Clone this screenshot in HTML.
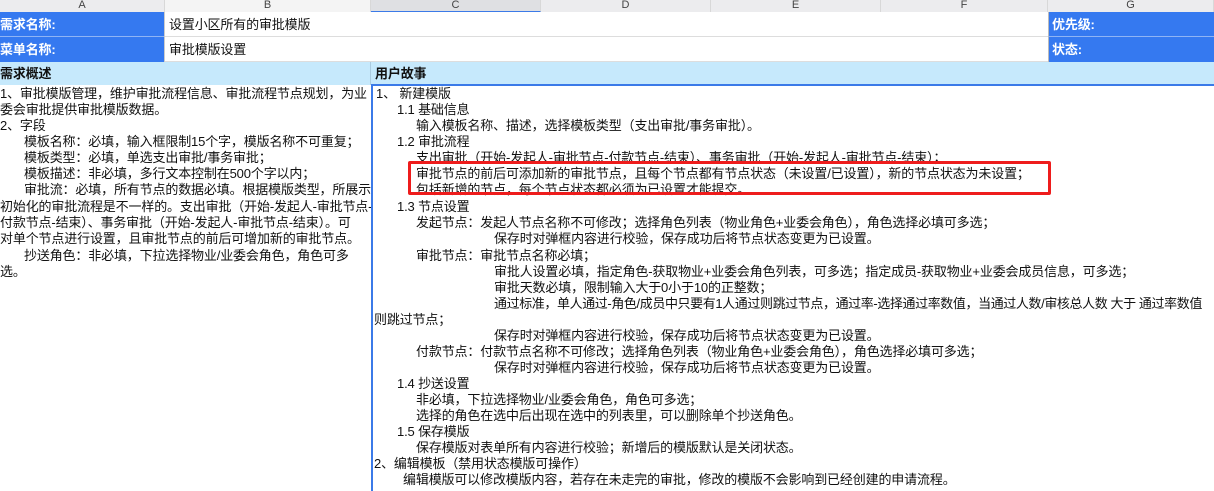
<!DOCTYPE html>
<html><head><meta charset="utf-8"><style>
*{margin:0;padding:0;box-sizing:border-box}
body{width:1214px;height:491px;overflow:hidden;background:#fff;position:relative;font-family:"Liberation Sans","Noto Sans CJK SC",sans-serif;font-size:13px;color:#111;letter-spacing:-0.15px}
.a{position:absolute;white-space:nowrap;line-height:16px;height:16px}
.b{position:absolute}
.hd{position:absolute;top:0;height:12px;font-size:11px;line-height:10px;text-align:center;color:#444;background:#ececee;border-right:1px solid #d8d8d8;overflow:hidden;letter-spacing:0}
.lbl{position:absolute;color:#fff;font-weight:bold;line-height:25px;background:#3579f0;padding-left:0}
</style></head><body>
<div class="hd" style="left:0;width:165px">A</div>
<div class="hd" style="left:165px;width:206px;background:#f4f4f4">B</div>
<div class="hd" style="left:371px;width:170px;background:#dfe0e3;border-bottom:1px solid #3b7ae8">C</div>
<div class="hd" style="left:541px;width:170px">D</div>
<div class="hd" style="left:711px;width:170px">E</div>
<div class="hd" style="left:881px;width:167px">F</div>
<div class="hd" style="left:1048px;width:166px">G</div>

<div class="lbl" style="left:0;top:12px;width:164px;height:25px;border-bottom:1px solid #8fb4f5">需求名称:</div>
<div class="lbl" style="left:0;top:37px;width:164px;height:25px">菜单名称:</div>
<div class="b" style="left:164px;top:12px;width:884px;height:50px;background:#fff;border-left:1px solid #ccc"></div>
<div class="b" style="left:165px;top:36px;width:883px;height:1px;background:#ddd"></div>
<div class="b" style="left:165px;top:61px;width:883px;height:1px;background:#ddd"></div>
<div class="a" style="left:169px;top:17px">设置小区所有的审批模版</div>
<div class="a" style="left:169px;top:42px">审批模版设置</div>
<div class="lbl" style="left:1048px;top:12px;width:166px;height:25px;padding-left:3px;border-bottom:1px solid #8fb4f5;border-left:1px solid #bbb">优先级:</div>
<div class="lbl" style="left:1048px;top:37px;width:166px;height:25px;padding-left:3px;border-left:1px solid #bbb">状态:</div>

<div class="b" style="left:0;top:62px;width:1214px;height:23px;background:#c6e9fc"></div>
<div class="b" style="left:370px;top:62px;width:1px;height:23px;background:#aacbe0"></div>
<div class="a" style="left:0;top:66px;font-weight:bold">需求概述</div>
<div class="a" style="left:375px;top:66px;font-weight:bold">用户故事</div>

<div class="a" style="left:0;top:86px">1、审批模版管理，维护审批流程信息、审批流程节点规划，为业</div>
<div class="a" style="left:0;top:102px">委会审批提供审批模版数据。</div>
<div class="a" style="left:0;top:118px">2、字段</div>
<div class="a" style="left:24px;top:134px">模板名称：必填，输入框限制15个字，模版名称不可重复；</div>
<div class="a" style="left:24px;top:150px">模板类型：必填，单选支出审批/事务审批；</div>
<div class="a" style="left:24px;top:166px">模板描述：非必填，多行文本控制在500个字以内；</div>
<div class="a" style="left:24px;top:182px">审批流：必填，所有节点的数据必填。根据模版类型，所展示</div>
<div class="a" style="left:0;top:199px">初始化的审批流程是不一样的。支出审批（开始-发起人-审批节点-</div>
<div class="a" style="left:0;top:215px">付款节点-结束）、事务审批（开始-发起人-审批节点-结束）。可</div>
<div class="a" style="left:0;top:231px">对单个节点进行设置，且审批节点的前后可增加新的审批节点。</div>
<div class="a" style="left:24px;top:248px">抄送角色：非必填，下拉选择物业/业委会角色，角色可多</div>
<div class="a" style="left:0;top:264px">选。</div>

<div class="b" style="left:371px;top:86px;width:843px;height:405px;background:#fff"></div>
<div class="b" style="left:371px;top:84px;width:843px;height:2px;background:#3b7ae8"></div>
<div class="b" style="left:371px;top:84px;width:2px;height:407px;background:#3b7ae8"></div>

<div class="a" style="left:376px;top:86px">1、 新建模版</div>
<div class="a" style="left:397px;top:102px">1.1 基础信息</div>
<div class="a" style="left:416px;top:118px">输入模板名称、描述，选择模板类型（支出审批/事务审批）。</div>
<div class="a" style="left:397px;top:134px">1.2 审批流程</div>
<div class="a" style="left:416px;top:150px">支出审批（开始-发起人-审批节点-付款节点-结束）、事务审批（开始-发起人-审批节点-结束）；</div>
<div class="a" style="left:416px;top:166px">审批节点的前后可添加新的审批节点，且每个节点都有节点状态（未设置/已设置），新的节点状态为未设置；</div>
<div class="a" style="left:416px;top:182px">包括新增的节点，每个节点状态都必须为已设置才能提交。</div>
<div class="b" style="left:408px;top:161px;width:643px;height:34px;border:3px solid #ee1c1c;border-radius:2px"></div>
<div class="a" style="left:397px;top:199px">1.3 节点设置</div>
<div class="a" style="left:416px;top:215px">发起节点：发起人节点名称不可修改；选择角色列表（物业角色+业委会角色），角色选择必填可多选；</div>
<div class="a" style="left:494px;top:231px">保存时对弹框内容进行校验，保存成功后将节点状态变更为已设置。</div>
<div class="a" style="left:416px;top:248px">审批节点：审批节点名称必填；</div>
<div class="a" style="left:494px;top:264px">审批人设置必填，指定角色-获取物业+业委会角色列表，可多选；指定成员-获取物业+业委会成员信息，可多选；</div>
<div class="a" style="left:494px;top:280px">审批天数必填，限制输入大于0小于10的正整数；</div>
<div class="a" style="left:494px;top:296px;letter-spacing:-0.4px">通过标准，单人通过-角色/成员中只要有1人通过则跳过节点，通过率-选择通过率数值，当通过人数/审核总人数 大于 通过率数值</div>
<div class="a" style="left:374px;top:312px">则跳过节点；</div>
<div class="a" style="left:494px;top:328px">保存时对弹框内容进行校验，保存成功后将节点状态变更为已设置。</div>
<div class="a" style="left:416px;top:344px">付款节点：付款节点名称不可修改；选择角色列表（物业角色+业委会角色），角色选择必填可多选；</div>
<div class="a" style="left:494px;top:360px">保存时对弹框内容进行校验，保存成功后将节点状态变更为已设置。</div>
<div class="a" style="left:397px;top:376px">1.4 抄送设置</div>
<div class="a" style="left:416px;top:392px">非必填，下拉选择物业/业委会角色，角色可多选；</div>
<div class="a" style="left:416px;top:408px">选择的角色在选中后出现在选中的列表里，可以删除单个抄送角色。</div>
<div class="a" style="left:397px;top:424px">1.5 保存模版</div>
<div class="a" style="left:416px;top:440px">保存模版对表单所有内容进行校验；新增后的模版默认是关闭状态。</div>
<div class="a" style="left:374px;top:456px">2、编辑模板（禁用状态模版可操作）</div>
<div class="a" style="left:403px;top:472px">编辑模版可以修改模版内容，若存在未走完的审批，修改的模版不会影响到已经创建的申请流程。</div>
</body></html>
